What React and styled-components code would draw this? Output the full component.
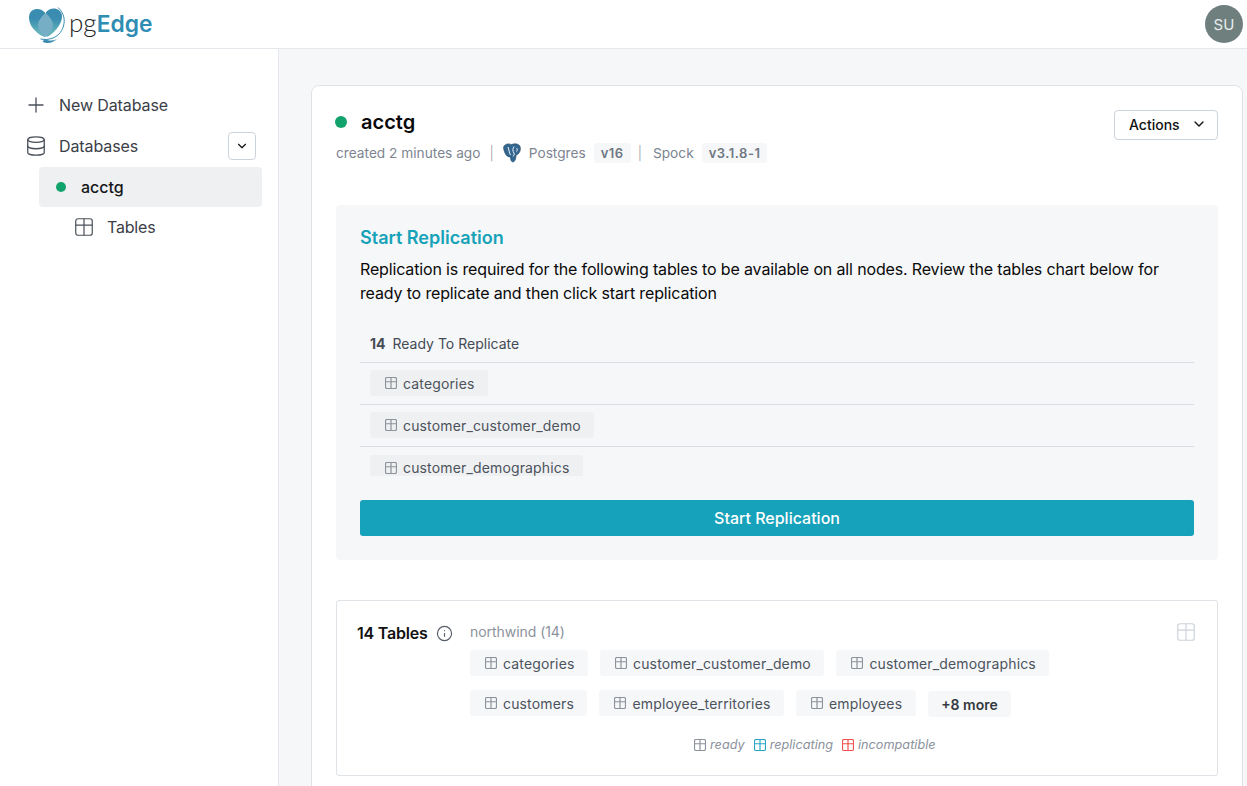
import React from "react";
import styled, { createGlobalStyle } from "styled-components";
import { Plus, Database, ChevronDown, Info } from "lucide-react";

const Global = createGlobalStyle`
  html, body { margin: 0; padding: 0; height: 100%; overflow: hidden; background: #fff; }
  body { font-family: Inter, "Liberation Sans", sans-serif; color: #000; }
  * { box-sizing: border-box; }
`;

const Page = styled.div`
  width: 1247px; height: 786px; display: flex; flex-direction: column; overflow: hidden;
`;
const Header = styled.header`
  height: 49px; flex: none; display: flex; align-items: center; justify-content: space-between;
  padding: 0 4px 0 29px; border-bottom: 1px solid #e4e7ec; background: #fff;
`;
const Logo = styled.div`display: flex; align-items: center; gap: 0;`;
const Wordmark = styled.div`
  font-size: 26px; line-height: 30px; margin-left: 2px; margin-top: -3px; color: #222;
  font-weight: 300; font-family: Lato, Inter, sans-serif;
`;
const WordEdge = styled.span`color: #2f8db3; font-weight: 600; font-family: Inter, sans-serif; font-size: 22.8px;`;
const Avatar = styled.div`
  width: 38px; height: 38px; border-radius: 50%; background: #6f7f7e; color: #e6ecec;
  font-size: 15px; display: flex; align-items: center; justify-content: center;
`;
const Body = styled.div`flex: 1; display: flex; min-height: 0;`;
const Sidebar = styled.nav`
  width: 279px; flex: none; border-right: 1px solid #e4e7ec; background: #fff;
  padding: 36px 16px 0 28px;
`;
const NavRow = styled.div`
  height: 40px; display: flex; align-items: center; gap: 11px; font-size: 16px; color: #3b4048;
  margin-bottom: 1px; letter-spacing: -0.1px;
`;
const NavIconBox = styled.span`
  width: 24px; margin-left: -4px; flex: none; display: flex; align-items: center; justify-content: center; color: #4a5059;
`;
const NavSpacer = styled.div`flex: 1;`;
const SmallBtn = styled.button`
  width: 28px; height: 28px; padding: 0; margin-right: 6px; border: 1px solid #cdd3da; border-radius: 4px; background: #fff;
  display: flex; align-items: center; justify-content: center; color: #111;
`;
const ActiveRow = styled.div`
  height: 40px; margin: 0 0 0 11px; width: 223px; background: #eff0f2; border-radius: 4px;
  display: flex; align-items: center; padding-left: 17px; gap: 15px; font-size: 16px; font-weight: 500; color: #14171a;
`;
const Dot = styled.span`
  width: ${p => p.$size}px; height: ${p => p.$size}px; margin-left: ${p => p.$ml || 0}px; border-radius: 50%; background: #12a36d; flex: none;
`;
const SubRow = styled.div`
  height: 40px; display: flex; align-items: center; gap: 14px; padding-left: 47px; font-size: 16px; color: #3b4048; letter-spacing: -0.2px;
`;
const Main = styled.main`
  flex: 1; background: #f6f7f9; padding: 36px 4px 0 32px; min-width: 0;
`;
const Card = styled.section`
  background: #fff; border: 1px solid #dfe3e8; border-radius: 8px 8px 0 0; height: 760px; padding: 24px;
`;
const TitleRow = styled.div`display: flex; justify-content: space-between; align-items: flex-start;`;
const TitleCol = styled.div`display: flex; flex-direction: column;`;
const Title = styled.h1`
  margin: 0; height: 24px; display: flex; align-items: center; gap: 14px; font-size: 20px; font-weight: 600; color: #0a0a0a;
`;
const Meta = styled.div`
  margin-top: 8px; height: 22px; display: flex; align-items: center; font-size: 13.7px; color: #7d8590;
`;
const Sep = styled.span`margin: 0 ${p => p.$r}px 0 ${p => p.$l}px; color: #9aa1aa; font-weight: 300;`;
const Brand = styled.span`margin-left: 8px;`;
const Version = styled.span`
  margin-left: ${p => p.$l}px; height: 20px; padding: 0 7px; border-radius: 3px; background: #f6f7f9; font-size: 13px; font-weight: 600; color: #6f7782;
  display: flex; align-items: center; letter-spacing: 0.5px;
`;
const ActionsBtn = styled.button`
  width: 104px; height: 30px; border: 1px solid #cdd3da; border-radius: 4px; background: #fff;
  display: flex; align-items: center; justify-content: flex-start; gap: 11px; font: 500 14px Inter, sans-serif; color: #111;
  padding: 0 0 2px 14px;
`;
const ReplBox = styled.div`
  margin-top: 41px; height: 355px; background: #f6f7f9; border-radius: 4px; padding: 21px 24px 24px;
`;
const ReplTitle = styled.h2`
  margin: 0; font-size: 18px; line-height: 24px; font-weight: 600; color: #16a2b8;
`;
const ReplText = styled.p`
  margin: 7px 0 0; font-size: 16px; line-height: 24px; color: #0a0a0a; font-weight: 400; letter-spacing: -0.15px;
`;
const ReadyHead = styled.div`
  margin-top: 20px; height: 38px; display: flex; align-items: center; gap: 7px; padding-left: 10px; font-size: 14px; color: #454b54;
  border-bottom: 1px solid #d9dee4;
`;
const Strong = styled.strong`font-weight: 700;`;
const ScrollList = styled.div`height: 113px; overflow: hidden;`;
const ListRow = styled.div`
  height: 42px; display: flex; align-items: center; padding: 0 0 1px 10px; border-bottom: 1px solid #d9dee4;
  &:last-child { border-bottom: none; }
`;
const Chip = styled.span`
  height: 26px; display: inline-flex; align-items: center; gap: 6px; padding: 0 13.5px 0 15px; border-radius: 3px;
  background: ${p => p.$bg || "#f6f7f9"}; font-size: 14px; color: #4c535c; white-space: nowrap; letter-spacing: 0.15px;
`;
const TableSvg = styled.svg`
  width: ${p => p.$size}px; height: ${p => p.$size}px; color: ${p => p.$c}; flex: none; display: block;
`;
const PrimaryBtn = styled.button`
  display: block; width: 100%; height: 36px; margin-top: 24px; border: none; border-radius: 3px; background: #16a2ba; color: #fff;
  font: 500 16px Inter, sans-serif; padding: 0;
`;
const TablesCard = styled.div`
  margin-top: 40px; height: 176px; border: 1px solid #dfe3e8; border-radius: 3px; padding: 20px 20px 0 20px; position: relative;
  display: flex;
`;
const TablesHead = styled.div`
  width: 113px; flex: none; display: flex; align-items: flex-start; gap: 8px; font-size: 16px; line-height: 24px; font-weight: 600; color: #111;
  letter-spacing: -0.2px;
`;
const InfoIcon = styled(Info)`width: 17px; height: 17px; color: #555c66; margin: 4px 0 0 0; flex: none; stroke-width: 1.6;`;
const TablesBody = styled.div`flex: 1; min-width: 0;`;
const SchemaName = styled.div`font-size: 14px; line-height: 22px; color: #8b929c; letter-spacing: -0.05px;`;
const ChipWrap = styled.div`
  margin-top: 7px; display: flex; flex-wrap: wrap; row-gap: 14px; column-gap: 12px; width: 640px;
`;
const MoreChip = styled.span`
  height: 26px; margin-top: 1px; padding: 0 13.5px; border-radius: 3px; background: #f6f7f9; font-size: 14px; font-weight: 600; color: #333940;
  display: inline-flex; align-items: center;
`;
const Legend = styled.div`
  margin-top: 19px; margin-left: 224px; display: flex; gap: 9px; font-size: 12.7px; font-style: italic; color: #8b929c; line-height: 18px;
`;
const LegendItem = styled.span`display: inline-flex; align-items: center; gap: 4px;`;
const ViewIconSlot = styled.span`position: absolute; top: 22px; right: 22px; display: block;`;
const ElephantWrap = styled.span`display: inline-flex;`;

const TableIcon = ({ size = 12, color = "#8d939b" }) => (
  <TableSvg $size={size} $c={color} viewBox="0 0 24 24" fill="none" stroke="currentColor">
    <rect x="1" y="1" width="22" height="22" rx="3" vectorEffect="non-scaling-stroke" strokeWidth="1.2" />
    <path d="M12 1v22M1 9.5h22" vectorEffect="non-scaling-stroke" strokeWidth="1.2" />
  </TableSvg>
);

const LogoMark = () => (
  <svg width="38" height="40" viewBox="0 0 38 40" style={{ display: "block" }}>
    <defs>
      <linearGradient id="lobe" x1="0" y1="0" x2="0" y2="1">
        <stop offset="0.35" stopColor="#3a8cb0" />
        <stop offset="0.8" stopColor="#5fb2b9" />
      </linearGradient>
    </defs>
    <path d="M16 8.500C13 5.500 10 4.500 7 5 2.500 5.800 0 9 0 13.500 0 20 4 25 8 28.500c2.500 2 5 3.500 8 4.500z" fill="url(#lobe)" />
    <path d="M17 8C20 5 23 4 26 4.500c4.500 1 7 4 7 8 0 4-2 8-5 12-3 3.500-6 6.500-10 8.500z" fill="url(#lobe)" />
    <path d="M16.500 9C12 13 9 17 9 21c0 5 3.500 9.500 7.500 12 4-2.500 7.500-7 7.500-12 0-4-3-8-7.500-12z" fill="#76aec6" />
    <path d="M29 3.500c4.500 4 7 10 6 16-1 7-5 12-11 14.500-4 1.500-8 2-12.500 1" fill="none" stroke="#3a8cb0" strokeWidth="1" />
    <path d="M9 30c3 4 8 6.500 13 6.500 2 0 4-.5 6-1.500-3 2.500-6 4-9 4-2 0-4-.5-5.500-1.500 1-1 1.500-1.500 2-2.500-2.500-1-5-3-6.500-5z" fill="#3a8cb0" />
  </svg>
);

const Elephant = () => (
  <svg width="18" height="20" viewBox="0 0 18 20" style={{ display: "block" }}>
    <path d="M1 3C3 .5 6 .5 8.500 1.500 11 .5 14.500.5 16.500 2.500c1.500 2 1 5.500-.5 7.500-1 1.200-2 2-3 2 0 2.500-.5 6-2.500 6.800C8.500 19.500 7.500 17 7.500 14c-2 0-4.500-1-5.500-4C1 7.500 0 5 1 3z" fill="#336791" stroke="#22435f" strokeWidth=".6" />
    <path d="M5 4c1 2.500 1 5.500 2.500 8M11 3.500c-1.500 2.500-1.500 4.500 0 6.500.4 1.500 0 2.500-1 3.500M13.500 5c1 1 1 2.500 0 3.500" fill="none" stroke="#fff" strokeWidth=".9" />
  </svg>
);

const firstChips = ["categories", "customer_customer_demo", "customer_demographics"];
const tableChips = ["categories", "customer_customer_demo", "customer_demographics", "customers", "employee_territories", "employees"];

export default function App() {
  return (
    <Page>
      <Global />
      <Header>
        <Logo>
          <LogoMark />
          <Wordmark>pg<WordEdge>Edge</WordEdge></Wordmark>
        </Logo>
        <Avatar>SU</Avatar>
      </Header>
      <Body>
        <Sidebar>
          <NavRow><NavIconBox><Plus size={24} strokeWidth={1.3} /></NavIconBox>New Database</NavRow>
          <NavRow>
            <NavIconBox><Database size={22} strokeWidth={1.4} /></NavIconBox>Databases<NavSpacer />
            <SmallBtn><ChevronDown size={14} /></SmallBtn>
          </NavRow>
          <ActiveRow><Dot $size={10} />acctg</ActiveRow>
          <SubRow><TableIcon size={18} color="#4a5059" />Tables</SubRow>
        </Sidebar>
        <Main>
          <Card>
            <TitleRow>
              <TitleCol>
                <Title><Dot $size={12} $ml={-1} />acctg</Title>
                <Meta>
                  created 2 minutes ago
                  <Sep $l={9} $r={9}>|</Sep>
                  <ElephantWrap><Elephant /></ElephantWrap>
                  <Brand>Postgres</Brand>
                  <Version $l={8}>v16</Version>
                  <Sep $l={7} $r={11}>|</Sep>
                  Spock
                  <Version $l={8}>v3.1.8-1</Version>
                </Meta>
              </TitleCol>
              <ActionsBtn>Actions<ChevronDown size={16} /></ActionsBtn>
            </TitleRow>
            <ReplBox>
              <ReplTitle>Start Replication</ReplTitle>
              <ReplText>
                Replication is required for the following tables to be available on all nodes. Review the tables chart below for ready to replicate and then click start replication
              </ReplText>
              <ReadyHead><Strong>14</Strong> Ready To Replicate</ReadyHead>
              <ScrollList>
                {firstChips.map(name => (
                  <ListRow key={name}>
                    <Chip $bg="#eff0f2"><TableIcon />{name}</Chip>
                  </ListRow>
                ))}
              </ScrollList>
              <PrimaryBtn>Start Replication</PrimaryBtn>
            </ReplBox>
            <TablesCard>
              <TablesHead>14 Tables<InfoIcon /></TablesHead>
              <TablesBody>
                <SchemaName>northwind (14)</SchemaName>
                <ChipWrap>
                  {tableChips.map(name => (
                    <Chip key={name}><TableIcon />{name}</Chip>
                  ))}
                  <MoreChip>+8 more</MoreChip>
                </ChipWrap>
                <Legend>
                  <LegendItem><TableIcon />ready</LegendItem>
                  <LegendItem><TableIcon color="#2ba7c4" />replicating</LegendItem>
                  <LegendItem><TableIcon color="#ef5350" />incompatible</LegendItem>
                </Legend>
              </TablesBody>
              <ViewIconSlot><TableIcon size={18} color="#cdd3da" /></ViewIconSlot>
            </TablesCard>
          </Card>
        </Main>
      </Body>
    </Page>
  );
}
